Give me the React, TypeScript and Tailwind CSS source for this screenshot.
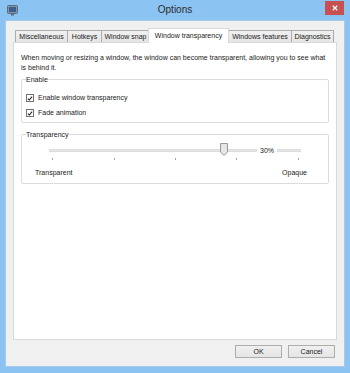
import { ReactNode } from "react";

const TABS = [
  { label: "Miscellaneous", w: 53 },
  { label: "Hotkeys", w: 35 },
  { label: "Window snap", w: 49 },
  { label: "Window transparency", w: 79 },
  { label: "Windows features", w: 64 },
  { label: "Diagnostics", w: 43 },
];

const ACTIVE = "Window transparency";
const TICKS = [3, 65, 126, 187, 249];

function Check({ children }: { children: ReactNode }) {
  return (
    <div className="flex h-[14px] items-center gap-[4px]">
      <span className="flex h-[8px] w-[8px] items-center justify-center border border-[#707070] bg-white">
        <svg viewBox="0 0 8 8" width={7} height={7}>
          <path d="M1.2 4.2 L3.1 6 L6.8 1.6" fill="none" stroke="#202020" strokeWidth={1.4} />
        </svg>
      </span>
      <span>{children}</span>
    </div>
  );
}

function Group({ title, children, className }: { title: string; children: ReactNode; className?: string }) {
  return (
    <fieldset className={`mx-[7px] rounded-[2px] border border-[#dcdcdc] px-[4px] ${className ?? ""}`}>
      <legend className="px-0 leading-[9px]">{title}</legend>
      {children}
    </fieldset>
  );
}

function WinButton({ children }: { children: ReactNode }) {
  return (
    <button
      type="button"
      className="flex h-[13px] w-[47px] items-center justify-center border border-[#adadad] bg-gradient-to-b from-[#f0f0f0] to-[#e5e5e5] text-[7px] leading-none text-[#1a1a1a]"
    >
      {children}
    </button>
  );
}

export default function App() {
  return (
    <div
      className="flex h-[373px] w-[350px] flex-col bg-[#8bc3f2] text-[7px] text-[#1a1a1a]"
      style={{ fontFamily: '"Liberation Sans", Arial, sans-serif' }}
    >
      {/* title bar */}
      <div className="grid h-[20px] grid-cols-[1fr_auto_1fr] items-center">
        <div className="pl-[7px]">
          <svg viewBox="0 0 11 11" width={11} height={11}>
            <rect x="0.5" y="0.5" width="10" height="8" rx="1" fill="#8494a9" stroke="#5b6b82" />
            <rect x="2" y="2" width="7" height="5" fill="#3d5f8e" />
            <rect x="4" y="9" width="3" height="1.5" fill="#5b6b82" />
          </svg>
        </div>
        <div className="text-[10px] leading-none text-[#2b2b2b]">Options</div>
        <div className="flex justify-end self-start pr-[6px] pt-[1px]">
          <div className="flex h-[14px] w-[19px] items-center justify-center bg-[#c75050]">
            <svg viewBox="0 0 8 8" width={6} height={6}>
              <path d="M1 1 L7 7 M7 1 L1 7" stroke="white" strokeWidth={1.6} />
            </svg>
          </div>
        </div>
      </div>

      {/* client area */}
      <div className="mx-[5px] mb-[6px] flex flex-1 flex-col border border-[#a8c9e8] bg-[#f0f0f0]">
        <div className="flex h-[21px] items-end pl-[9px]">
          {TABS.map((t, i) => {
            const on = t.label === ACTIVE;
            return (
              <div
                key={t.label}
                style={{ width: on ? t.w + 2 : t.w }}
                className={
                  on
                    ? "relative z-10 -mb-px -ml-[2px] flex h-[15px] items-start justify-center border border-b-0 border-[#d9d9d9] bg-white pt-[2px] leading-[9px]"
                    : `flex h-[12px] items-center justify-center border border-b-0 border-[#acacac] bg-gradient-to-b from-[#f0f0f0] to-[#e5e5e5] leading-none ${i > 0 ? "-ml-px" : ""}`
                }
              >
                {t.label}
              </div>
            );
          })}
        </div>

        <div className="mx-[7px] flex h-[298px] flex-col border border-[#d9d9d9] bg-white">
          <p className="px-[7px] pt-[10px] leading-[10px]">
            When moving or resizing a window, the window can become transparent, allowing you to see what
            <br />
            is behind it.
          </p>

          <Group title="Enable" className="mt-[2px] pb-[2px]">
            <div className="pt-[7px]">
              <Check>Enable window transparency</Check>
              <div className="h-[1px]" />
              <Check>Fade animation</Check>
            </div>
          </Group>

          <Group title="Transparency" className="mt-[7px] pb-[5px]">
            <div className="relative ml-[23px] mt-[4px] h-[14px] w-[252px]">
              <div className="absolute left-0 right-0 top-[6px] h-[3px] border border-[#dcdcdc] bg-[#e7e7e7]" />
              <div className="absolute left-[208px] top-[3px] bg-white px-[3px] leading-[9px]">30%</div>
              <svg className="absolute left-[171px] top-0" width={8} height={13} viewBox="0 0 8 13">
                <path d="M0.5 0.5 H7.5 V9 L4 12.5 L0.5 9 Z" fill="#e6e6e6" stroke="#9a9a9a" />
              </svg>
              {TICKS.map((x) => (
                <div key={x} className="absolute top-[15px] h-[2px] w-px bg-[#a0a0a0]" style={{ left: x }} />
              ))}
            </div>
            <div className="mt-[11px] flex justify-between px-[9px] pr-[17px] leading-[10px]">
              <span>Transparent</span>
              <span>Opaque</span>
            </div>
          </Group>
        </div>

        <div className="mt-[5px] flex justify-end gap-[6px] pr-[9px]">
          <WinButton>OK</WinButton>
          <WinButton>Cancel</WinButton>
        </div>
      </div>
    </div>
  );
}
